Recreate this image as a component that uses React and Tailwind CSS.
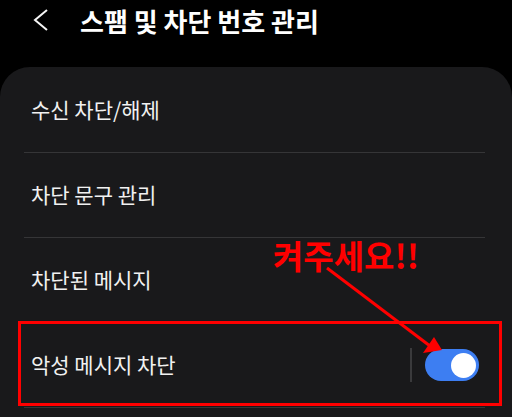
const font = { fontFamily: '"Noto Sans CJK KR", "Noto Sans", sans-serif' };

function Row({ label, children }) {
  return (
    <div className="ml-[24px] mr-[27px] h-[85px] flex items-center border-b border-[#353537] pl-[7px] pr-[6px]">
      <span className="text-[21px] text-[#f1f1f1] flex-1">{label}</span>
      {children}
    </div>
  );
}

export default function App() {
  return (
    <div
      className="relative w-[512px] h-[417px] bg-black overflow-hidden [font-family:'Noto_Sans_CJK_KR','Noto_Sans',sans-serif]"
    >
      {/* header */}
      <div className="h-[40px] flex items-center">
        <svg width="18" height="24" viewBox="0 0 18 24" className="ml-[31px]">
          <path d="M16 2 L4 12 L16 22" fill="none" stroke="#f5f5f5" strokeWidth="2" />
        </svg>
        <h1 className="ml-[31px] text-[26px] font-bold text-white">
          스팸 및 차단 번호 관리
        </h1>
      </div>

      {/* card */}
      <div className="mt-[27px] bg-[#19191b] rounded-t-[30px] pt-[1px] h-[360px]">
        <Row label="수신 차단/해제" />
        <Row label="차단 문구 관리" />
        <Row label="차단된 메시지" />
        <Row label="악성 메시지 차단">
          <div className="w-[2px] h-[34px] bg-[#3a3a3c] mr-[13px]" />
          <div className="w-[54px] h-[32px] rounded-full bg-[#3d7ef2] flex items-center justify-end pr-[3px]">
            <div className="w-[25px] h-[25px] rounded-full bg-white" />
          </div>
        </Row>
      </div>

      {/* annotation */}
      <div className="absolute left-[18px] top-[321px] w-[484px] h-[85px] border-[3px] border-[#ff0000]" />
      <div
        className="absolute left-[273px] top-[239px] text-[33px] font-bold leading-none text-[#ff0000]"
        style={font}
      >
        켜주세요!!
      </div>
      <svg className="absolute left-0 top-0" width="512" height="417">
        <line x1="327" y1="268" x2="430" y2="346" stroke="#ff0000" strokeWidth="3" />
        <polygon points="423,353 434,337 442,350" fill="#ff0000" />
      </svg>
    </div>
  );
}
